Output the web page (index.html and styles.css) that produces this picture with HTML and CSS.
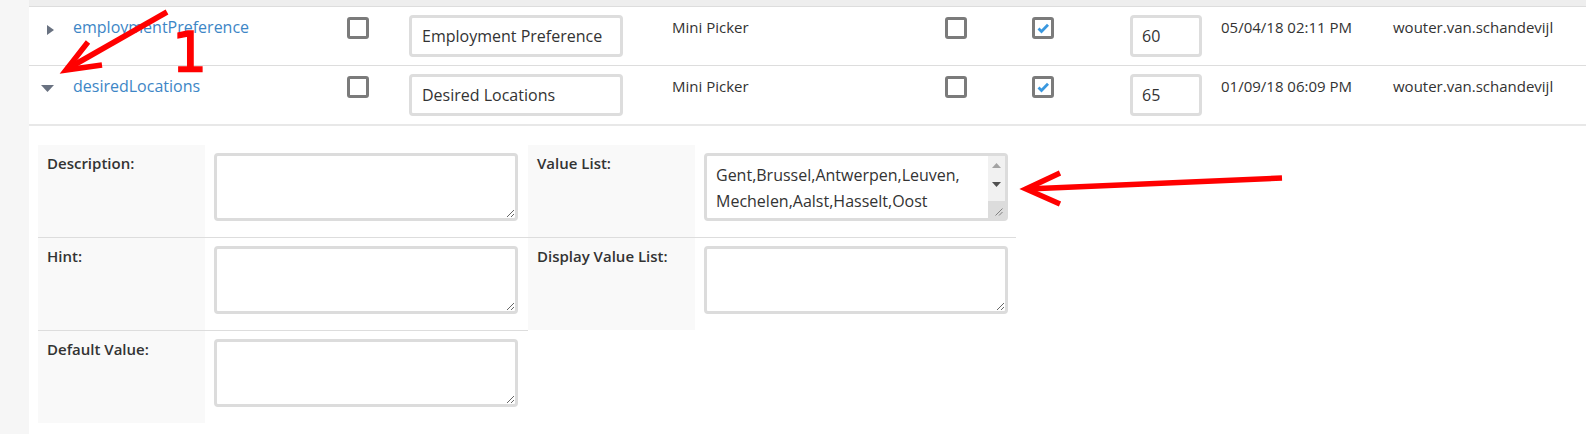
FILE: index.html
```html
<!DOCTYPE html>
<html lang="en">
<head>
<meta charset="utf-8">
<title>Fields</title>
<link rel="stylesheet" href="styles.css">
</head>
<body>
<div class="page">
  <div class="strip"></div>
  <div class="content">
    <div class="head-band"></div>
    <table class="grid">
      <colgroup>
        <col class="c-exp"><col class="c-name"><col class="c-chk1"><col class="c-label"><col class="c-type"><col class="c-chk2"><col class="c-chk3"><col class="c-order"><col class="c-date"><col class="c-user">
      </colgroup>
      <tbody>
        <tr class="row">
          <td class="exp"><svg class="tri" width="14" height="11" viewBox="0 0 14 11"><polygon points="6,0 13,5 6,10"/></svg></td>
          <td><a class="name" href="#">employmentPreference</a></td>
          <td><span class="cb"></span></td>
          <td><input class="text-in" type="text" value="Employment Preference"></td>
          <td class="plain">Mini Picker</td>
          <td><span class="cb"></span></td>
          <td><span class="cb"><svg class="tick" width="16" height="16" viewBox="0 0 16 16"><polyline points="3.5,8.5 6.5,11.5 13,4.8"/></svg></span></td>
          <td><input class="num-in" type="text" value="60"></td>
          <td class="plain">05/04/18 02:11 PM</td>
          <td class="plain">wouter.van.schandevijl</td>
        </tr>
        <tr class="row open">
          <td class="exp"><svg class="tri" width="14" height="11" viewBox="0 0 14 11"><polygon points="0,1 13,1 6.5,8"/></svg></td>
          <td><a class="name" href="#">desiredLocations</a></td>
          <td><span class="cb"></span></td>
          <td><input class="text-in" type="text" value="Desired Locations"></td>
          <td class="plain">Mini Picker</td>
          <td><span class="cb"></span></td>
          <td><span class="cb"><svg class="tick" width="16" height="16" viewBox="0 0 16 16"><polyline points="3.5,8.5 6.5,11.5 13,4.8"/></svg></span></td>
          <td><input class="num-in" type="text" value="65"></td>
          <td class="plain">01/09/18 06:09 PM</td>
          <td class="plain">wouter.van.schandevijl</td>
        </tr>
        <tr class="detail">
          <td colspan="10">
            <div class="props-wrap">
              <div class="props left">
                <div class="prow"><div class="lbl">Description:</div><div class="fld"><textarea class="ta"></textarea></div></div>
                <div class="prow"><div class="lbl">Hint:</div><div class="fld"><textarea class="ta"></textarea></div></div>
                <div class="prow"><div class="lbl">Default Value:</div><div class="fld"><textarea class="ta"></textarea></div></div>
              </div>
              <div class="props right">
                <div class="prow"><div class="lbl">Value List:</div><div class="fld">
                  <div class="ta-box">
                    <textarea class="ta ta-list">Gent,Brussel,Antwerpen,Leuven, Mechelen,Aalst,Hasselt,Oost Vlaanderen,West Vlaanderen,Limburg,Namen,Luik</textarea>
                    <div class="vscroll">
                      <span class="sb-btn"><svg width="9" height="5" viewBox="0 0 9 5"><polygon class="arr-off" points="0,5 9,5 4.5,0"/></svg></span>
                      <span class="sb-btn"><svg width="9" height="5" viewBox="0 0 9 5"><polygon class="arr-on" points="0,0 9,0 4.5,5"/></svg></span>
                      <span class="sb-track"></span>
                      <span class="sb-corner"><svg width="17" height="17" viewBox="0 0 17 17"><path d="M14.5 7.5 L7.5 14.5 M14.5 11 L11 14.5"/></svg></span>
                    </div>
                  </div>
                </div></div>
                <div class="prow"><div class="lbl">Display Value List:</div><div class="fld"><textarea class="ta"></textarea></div></div>
              </div>
            </div>
          </td>
        </tr>
      </tbody>
    </table>
  </div>

  <svg class="marks" width="1586" height="434" viewBox="0 0 1586 434">
    <g class="red">
      <line x1="167" y1="12" x2="67" y2="69"/>
      <polyline points="88,42 66,70 102,65"/>
      <line x1="1282" y1="178" x2="1027" y2="189"/>
      <polyline points="1060,173 1026,189 1060,204"/>
    </g>
  </svg>
  <span class="num-mark">1</span>
</div>
</body>
</html>
```

FILE: styles.css
```css
* { box-sizing: border-box; }

html, body {
  margin: 0;
  padding: 0;
}

body {
  width: 1586px;
  height: 434px;
  overflow: hidden;
  background: #ffffff;
  font-family: "Open Sans", "Liberation Sans", sans-serif;
  color: #333333;
}

.page {
  position: relative;
  display: flex;
  height: 434px;
}

.strip {
  width: 29px;
  flex: none;
  background: #f6f6f6;
}

.content {
  flex: 1;
  min-width: 0;
  background: #ffffff;
}

.head-band {
  height: 7px;
  background: #eeeeee;
  border-bottom: 1px solid #dddddd;
}

/* main grid */
.grid {
  width: 100%;
  table-layout: fixed;
  border-collapse: collapse;
}

.c-exp { width: 34px; }
.c-name { width: 274px; }
.c-chk1 { width: 62px; }
.c-label { width: 263px; }
.c-type { width: 273px; }
.c-chk2 { width: 87px; }
.c-chk3 { width: 98px; }
.c-order { width: 91px; }
.c-date { width: 172px; }
.c-user { width: 203px; }

.grid td {
  vertical-align: top;
  padding: 8px 0 8px 10px;
}

.row td {
  border-bottom: 1px solid #dddddd;
}

.row.open td {
  border-bottom: 2px solid #e8e8e8;
}

.grid td.exp {
  padding-left: 12px;
}

.tri {
  display: block;
  margin-top: 10px;
  fill: #697281;
}

.name {
  font-size: 16px;
  line-height: 24px;
  color: #3d86c6;
  text-decoration: none;
  white-space: nowrap;
}

.plain {
  font-size: 15px;
  line-height: 24px;
  white-space: nowrap;
  color: #333333;
}

.cb {
  display: block;
  width: 22px;
  height: 22px;
  margin-top: 2px;
  border: 3px solid #7b7b7b;
  border-radius: 3px;
  background: #ffffff;
}

.tick {
  display: block;
  fill: none;
  stroke: #3a98df;
  stroke-width: 2.8;
}

.text-in,
.num-in {
  display: block;
  height: 42px;
  border: 3px solid #dddddd;
  border-radius: 4px;
  background: #ffffff;
  font-family: "Open Sans", "Liberation Sans", sans-serif;
  font-size: 16px;
  color: #333333;
  padding: 0 0 1px 10px;
  outline: none;
}

.text-in { width: 214px; }
.num-in { width: 72px; padding-left: 9px; }

/* detail panel */
.grid tr.detail td {
  padding: 19px 0 0 9px;
}

.props-wrap {
  display: flex;
  align-items: flex-start;
}

.prow {
  display: flex;
}

.prow + .prow {
  border-top: 1px solid #dddddd;
}

.lbl {
  width: 167px;
  flex: none;
  background: #f9f9f9;
  padding: 8px 9px;
  font-size: 15px;
  line-height: 20px;
  font-weight: 600;
  color: #333333;
}

.fld {
  padding: 8px 10px 16px 9px;
}

.right .fld {
  padding-right: 8px;
}

.ta {
  display: block;
  width: 304px;
  height: 68px;
  border: 3px solid #dcdcdc;
  border-radius: 4px;
  padding: 6px 9px;
  font-family: "Open Sans", "Liberation Sans", sans-serif;
  font-size: 16px;
  line-height: 26px;
  color: #333333;
  background: #ffffff;
  resize: both;
  outline: none;
}

/* value list with its scrollbar */
.ta-box {
  position: relative;
  width: 304px;
}

.ta-list {
  overflow: hidden;
  resize: none;
  padding-right: 26px;
}

.vscroll {
  position: absolute;
  top: 3px;
  right: 3px;
  bottom: 3px;
  width: 17px;
  display: flex;
  flex-direction: column;
  background: #f1f1f1;
}

.sb-btn {
  height: 19px;
  flex: none;
  display: flex;
  align-items: center;
  justify-content: center;
}

.sb-btn svg { display: block; }

.arr-off { fill: #a3a3a3; }
.arr-on { fill: #505050; }

.sb-track {
  flex: 1;
}

.sb-corner {
  height: 17px;
  flex: none;
  background: #dcdcdc;
}

.sb-corner svg {
  display: block;
  fill: none;
  stroke: #808080;
  stroke-width: 1;
}

/* annotations */
.marks {
  position: absolute;
  top: 0;
  left: 0;
  pointer-events: none;
}

.red line,
.red polyline {
  fill: none;
  stroke: #ff0000;
  stroke-width: 5.5;
  stroke-linejoin: miter;
}

.num-mark {
  position: absolute;
  left: 172px;
  top: 25px;
  font-family: "DejaVu Sans", sans-serif;
  font-weight: 400;
  font-size: 55px;
  line-height: 55px;
  color: #ff0000;
  -webkit-text-stroke: 1.4px #ff0000;
  pointer-events: none;
}
```
